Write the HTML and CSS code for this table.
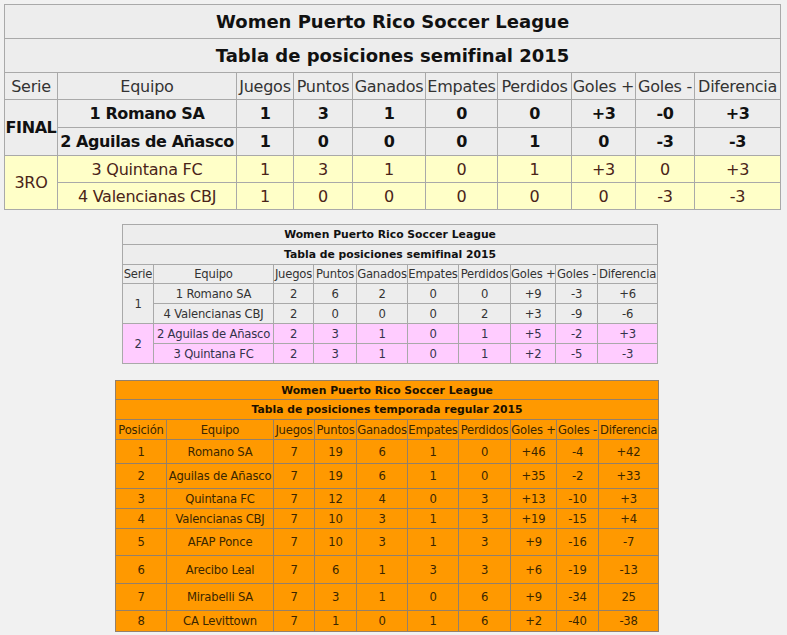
FILE: index.html
```html
<!DOCTYPE html>
<html lang="es">
<head>
<meta charset="utf-8">
<title>Women Puerto Rico Soccer League</title>
<link rel="stylesheet" href="styles.css">
</head>
<body>
<table class="tbl t1">
  <colgroup>
    <col class="c53"><col class="c179"><col class="c57"><col class="c59"><col class="c73"><col class="c72"><col class="c74"><col class="c64"><col class="c59"><col class="c86">
  </colgroup>
  <tr class="title"><th colspan="10">Women Puerto Rico Soccer League</th></tr>
  <tr class="title"><th colspan="10">Tabla de posiciones semifinal 2015</th></tr>
  <tr class="head"><td>Serie</td><td>Equipo</td><td>Juegos</td><td>Puntos</td><td>Ganados</td><td>Empates</td><td>Perdidos</td><td>Goles +</td><td>Goles -</td><td>Diferencia</td></tr>
  <tr class="final r1"><td rowspan="2">FINAL</td><td>1 Romano SA</td><td>1</td><td>3</td><td>1</td><td>0</td><td>0</td><td>+3</td><td>-0</td><td>+3</td></tr>
  <tr class="final r2"><td>2 Aguilas de Añasco</td><td>1</td><td>0</td><td>0</td><td>0</td><td>1</td><td>0</td><td>-3</td><td>-3</td></tr>
  <tr class="third r3"><td rowspan="2">3RO</td><td>3 Quintana FC</td><td>1</td><td>3</td><td>1</td><td>0</td><td>1</td><td>+3</td><td>0</td><td>+3</td></tr>
  <tr class="third r4"><td>4 Valencianas CBJ</td><td>1</td><td>0</td><td>0</td><td>0</td><td>0</td><td>0</td><td>-3</td><td>-3</td></tr>
</table>

<table class="tbl small t2">
  <colgroup>
    <col class="s31"><col class="s120"><col class="s40"><col class="s43"><col class="s51"><col class="s51"><col class="s52"><col class="s45"><col class="s42"><col class="s60">
  </colgroup>
  <tr class="stitle"><th colspan="10">Women Puerto Rico Soccer League</th></tr>
  <tr class="stitle"><th colspan="10">Tabla de posiciones semifinal 2015</th></tr>
  <tr class="shead"><td>Serie</td><td>Equipo</td><td>Juegos</td><td>Puntos</td><td>Ganados</td><td>Empates</td><td>Perdidos</td><td>Goles +</td><td>Goles -</td><td>Diferencia</td></tr>
  <tr class="srow"><td rowspan="2">1</td><td>1 Romano SA</td><td>2</td><td>6</td><td>2</td><td>0</td><td>0</td><td>+9</td><td>-3</td><td>+6</td></tr>
  <tr class="srow"><td>4 Valencianas CBJ</td><td>2</td><td>0</td><td>0</td><td>0</td><td>2</td><td>+3</td><td>-9</td><td>-6</td></tr>
  <tr class="srow pink"><td rowspan="2">2</td><td>2 Aguilas de Añasco</td><td>2</td><td>3</td><td>1</td><td>0</td><td>1</td><td>+5</td><td>-2</td><td>+3</td></tr>
  <tr class="srow pink"><td>3 Quintana FC</td><td>2</td><td>3</td><td>1</td><td>0</td><td>1</td><td>+2</td><td>-5</td><td>-3</td></tr>
</table>

<table class="tbl small t3">
  <colgroup>
    <col class="s51"><col class="s107"><col class="s41"><col class="s42"><col class="s51"><col class="s51"><col class="s52"><col class="s46"><col class="s42"><col class="s60">
  </colgroup>
  <tr class="stitle h19"><th colspan="10">Women Puerto Rico Soccer League</th></tr>
  <tr class="stitle h20"><th colspan="10">Tabla de posiciones temporada regular 2015</th></tr>
  <tr class="shead h20"><td>Posición</td><td>Equipo</td><td>Juegos</td><td>Puntos</td><td>Ganados</td><td>Empates</td><td>Perdidos</td><td>Goles +</td><td>Goles -</td><td>Diferencia</td></tr>
  <tr class="h24"><td>1</td><td>Romano SA</td><td>7</td><td>19</td><td>6</td><td>1</td><td>0</td><td>+46</td><td>-4</td><td>+42</td></tr>
  <tr class="h25"><td>2</td><td>Aguilas de Añasco</td><td>7</td><td>19</td><td>6</td><td>1</td><td>0</td><td>+35</td><td>-2</td><td>+33</td></tr>
  <tr class="h20"><td>3</td><td>Quintana FC</td><td>7</td><td>12</td><td>4</td><td>0</td><td>3</td><td>+13</td><td>-10</td><td>+3</td></tr>
  <tr class="h20"><td>4</td><td>Valencianas CBJ</td><td>7</td><td>10</td><td>3</td><td>1</td><td>3</td><td>+19</td><td>-15</td><td>+4</td></tr>
  <tr class="h27"><td>5</td><td>AFAP Ponce</td><td>7</td><td>10</td><td>3</td><td>1</td><td>3</td><td>+9</td><td>-16</td><td>-7</td></tr>
  <tr class="h28"><td>6</td><td>Arecibo Leal</td><td>7</td><td>6</td><td>1</td><td>3</td><td>3</td><td>+6</td><td>-19</td><td>-13</td></tr>
  <tr class="h27"><td>7</td><td>Mirabelli SA</td><td>7</td><td>3</td><td>1</td><td>0</td><td>6</td><td>+9</td><td>-34</td><td>25</td></tr>
  <tr class="h21"><td>8</td><td>CA Levittown</td><td>7</td><td>1</td><td>0</td><td>1</td><td>6</td><td>+2</td><td>-40</td><td>-38</td></tr>
</table>
</body>
</html>
```

FILE: styles.css
```css
html, body {
  margin: 0;
  padding: 0;
}
body {
  background: #f1f1f1;
  padding: 4px;
  font-family: "DejaVu Sans", Verdana, sans-serif;
  color: #222;
}
.tbl {
  border-collapse: collapse;
  table-layout: fixed;
  text-align: center;
}
.tbl th, .tbl td {
  padding: 0;
  border: 1px solid #a9a9a9;
  white-space: nowrap;
  text-align: center;
  vertical-align: middle;
}

/* table 1 */
.t1 {
  width: 777px;
  background: #ededed;
  border: 1px solid #6a6a6a;
  font-size: 16px;
}
.t1 td {
  letter-spacing: -0.25px;
}
.c53 { width: 53px; }
.c179 { width: 179px; }
.c57 { width: 57px; }
.c59 { width: 59px; }
.c73 { width: 73px; }
.c72 { width: 72px; }
.c74 { width: 74px; }
.c64 { width: 64px; }
.c86 { width: 86px; }
.t1 .title { height: 34px; }
.t1 .title th {
  font-size: 18px;
  font-weight: bold;
  color: #111;
}
.t1 .head { height: 27px; }
.t1 .head td { color: #333; }
.t1 .final { height: 28px; }
.t1 .final td {
  font-weight: bold;
  color: #111;
  letter-spacing: -0.4px;
}
.t1 .third { height: 27px; background: #ffffc8; }
.t1 .third td { color: #4a2418; }

/* small tables */
.small {
  font-size: 11.6px;
}
.small td {
  letter-spacing: -0.2px;
}
.t2 {
  width: 536px;
  margin: 14px 0 0 118px;
  background: #ededed;
  border: 1px solid #555;
}
.s31 { width: 31px; }
.s40 { width: 40px; }
.s41 { width: 41px; }
.s42 { width: 42px; }
.s43 { width: 43px; }
.s45 { width: 45px; }
.s46 { width: 46px; }
.s51 { width: 51px; }
.s52 { width: 52px; }
.s60 { width: 60px; }
.s107 { width: 107px; }
.s120 { width: 120px; }
.small .stitle th {
  font-size: 10.8px;
  font-weight: bold;
  color: #111;
}
.t2 tr { height: 20px; }
.t2 .shead { height: 19px; }
.t2 .shead td { color: #333; }
.t2 .srow td { color: #333; }
.t2 .pink { background: #ffccff; }
.t2 .pink td { color: #33334a; }

.t3 {
  width: 544px;
  margin: 16px 0 0 111px;
  background: #ff9900;
  border: 1px solid #333;
}
.t3 th, .t3 td {
  border-color: #94806a;
  color: #3a2600;
}
.t3 .stitle th { color: #1a1000; }
.h19 { height: 19px; }
.h20 { height: 20px; }
.h21 { height: 21px; }
.h24 { height: 24px; }
.h25 { height: 25px; }
.h27 { height: 27px; }
.h28 { height: 28px; }
```
